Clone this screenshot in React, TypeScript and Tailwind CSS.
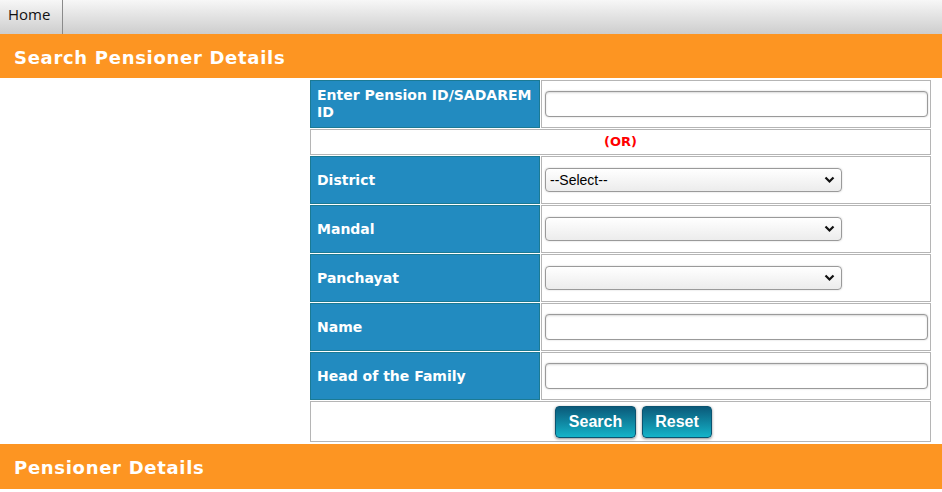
import React from 'react';

const LABEL_CELL =
  'bg-[#228bc0] border border-[#1b7a94] pl-[6px] pr-[2px] text-[14px] font-bold text-white leading-[17px] align-middle';
const VALUE_CELL = 'border border-[#b5b5b5] pl-[3px] pr-[2px] align-middle';

function TextBox() {
  return (
    <input
      type="text"
      className="block w-full h-[26px] rounded-[4px] border border-[#9a9a9a] bg-white shadow-[inset_0_1px_2px_rgba(0,0,0,0.15),0_0_2px_rgba(0,0,0,0.2)] px-2 text-[14px] outline-none"
    />
  );
}

function SelectBox({ value }: { value?: string }) {
  return (
    <div className="relative w-[297px] h-[24px]">
      <select
        defaultValue={value ?? ''}
        className="block w-full h-full appearance-none rounded-[4px] border border-[#9a9a9a] bg-gradient-to-b from-white to-[#ececec] shadow-[0_0_2px_rgba(0,0,0,0.2)] pl-[4px] pr-6 text-[14px] text-black outline-none"
        style={{ fontFamily: '"Liberation Sans", Arial, sans-serif' }}
      >
        {value ? <option value={value}>{value}</option> : <option value="" />}
      </select>
      <svg
        className="pointer-events-none absolute right-[7px] top-[8px]"
        width="11"
        height="8"
        viewBox="0 0 11 8"
      >
        <path d="M1.5 1.5 L5.5 5.5 L9.5 1.5" fill="none" stroke="#111" strokeWidth="2.2" />
      </svg>
    </div>
  );
}

function Button({ label, width }: { label: string; width: string }) {
  return (
    <button
      type="button"
      className={`${width} h-[32px] rounded-[4px] border border-[#0b5470] bg-gradient-to-b from-[#0b5a7a] to-[#14b4c9] text-white text-[16px] font-bold shadow-[0_1px_3px_rgba(0,0,0,0.45)]`}
      style={{ fontFamily: '"Liberation Sans", Arial, sans-serif' }}
    >
      {label}
    </button>
  );
}

const ROWS: { label: string; field: React.ReactNode }[] = [
  { label: 'District', field: <SelectBox value="--Select--" /> },
  { label: 'Mandal', field: <SelectBox /> },
  { label: 'Panchayat', field: <SelectBox /> },
  { label: 'Name', field: <TextBox /> },
  { label: 'Head of the Family', field: <TextBox /> },
];

export default function App() {
  return (
    <div className="w-[942px] h-[492px] bg-white overflow-hidden" style={{ fontFamily: '"DejaVu Sans", Verdana, sans-serif' }}>
      <div className="h-[34px] flex bg-gradient-to-b from-[#f7f7f7] to-[#cdcdcd]">
        <div
          className="h-full pl-[8px] pr-[12px] border-r border-[#8a8a8a] flex items-start pt-[3px] text-[15px] text-[#111]"
          style={{ fontFamily: '"Open Sans", "Segoe UI", sans-serif' }}
        >
          Home
        </div>
      </div>
      <div className="h-[44px] bg-[#fd9522] flex items-center pt-[2px] px-[14px] text-white font-bold text-[18px] tracking-[0.7px]">
        Search Pensioner Details
      </div>
      <div className="pl-[309px] pt-px">
        <table className="w-[623px] table-fixed border-separate border-spacing-[1px]">
          <colgroup>
            <col className="w-[230px]" />
            <col />
          </colgroup>
          <tbody>
            <tr className="h-[48px]">
              <td className={LABEL_CELL}>Enter Pension ID/SADAREM ID</td>
              <td className={VALUE_CELL}>
                <TextBox />
              </td>
            </tr>
            <tr className="h-[26px]">
              <td colSpan={2} className="border border-[#b5b5b5] text-center text-[13px] font-bold text-[#ff0000] align-middle">
                (OR)
              </td>
            </tr>
            {ROWS.map((row) => (
              <tr key={row.label} className="h-[48px]">
                <td className={LABEL_CELL}>{row.label}</td>
                <td className={VALUE_CELL}>{row.field}</td>
              </tr>
            ))}
            <tr className="h-[41px]">
              <td colSpan={2} className="border border-[#b5b5b5] align-middle">
                <div className="flex justify-center gap-[6px] pl-[26px]">
                  <Button label="Search" width="w-[81px]" />
                  <Button label="Reset" width="w-[70px]" />
                </div>
              </td>
            </tr>
          </tbody>
        </table>
      </div>
      <div className="mt-px h-[45px] bg-[#fd9522] flex items-center pt-[2px] px-[14px] text-white font-bold text-[18px] tracking-[0.7px]">
        Pensioner Details
      </div>
    </div>
  );
}
